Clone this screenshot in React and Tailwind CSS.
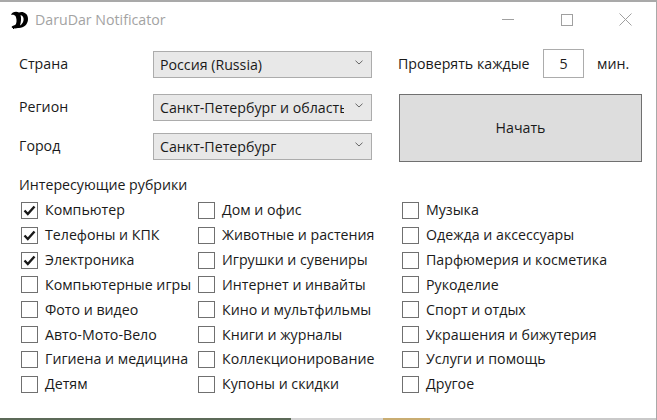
const left = [
  ["Компьютер", true],
  ["Телефоны и КПК", true],
  ["Электроника", true],
  ["Компьютерные игры", false],
  ["Фото и видео", false],
  ["Авто-Мото-Вело", false],
  ["Гигиена и медицина", false],
  ["Детям", false],
];
const middle = ["Дом и офис", "Животные и растения", "Игрушки и сувениры", "Интернет и инвайты", "Кино и мультфильмы", "Книги и журналы", "Коллекционирование", "Купоны и скидки"];
const right = ["Музыка", "Одежда и аксессуары", "Парфюмерия и косметика", "Рукоделие", "Спорт и отдых", "Украшения и бижутерия", "Услуги и помощь", "Другое"];

function Check({ label, checked }) {
  return (
    <div className="flex items-center h-[24.85px] gap-[7px]">
      <div className="w-[17px] h-[17px] shrink-0 border border-[#707070] bg-white flex items-center justify-center">
        {checked && (
          <svg width="13" height="11" viewBox="0 0 13 11">
            <path d="M1.5 5.5 L4.8 9 L11.5 1.5" fill="none" stroke="#1a1a1a" strokeWidth="2.4" />
          </svg>
        )}
      </div>
      <span className="whitespace-nowrap">{label}</span>
    </div>
  );
}

function Select({ value }) {
  return (
    <div className="w-[219px] h-[27px] border border-[#acacac] bg-[#e8e8e8] flex items-center pl-[6px] pr-[8px]">
      <span className="w-[184px] whitespace-nowrap overflow-hidden">{value}</span>
      <svg className="ml-auto shrink-0 mb-[4px]" width="8" height="5" viewBox="0 0 8 5">
        <path d="M0.5 0.7 L4 4 L7.5 0.7" fill="none" stroke="#666" strokeWidth="1" />
      </svg>
    </div>
  );
}

function Row({ label, value, className }) {
  return (
    <div className={"flex items-center " + className}>
      <span className="w-[134px] -mt-[2px]">{label}</span>
      <Select value={value} />
    </div>
  );
}

export default function App() {
  return (
    <div className="w-[657px] h-[420px] overflow-hidden bg-white text-[14.2px] leading-[20px] text-[#1a1a1a] font-['Open_Sans','Noto_Sans',sans-serif] flex flex-col border-r border-[#a9a9a9]">
      <div className="h-[37px] shrink-0 border-t-2 border-[#a9a9a9] flex items-center">
        <svg className="ml-[11px]" width="17" height="18" viewBox="0 0 17 18">
          <path d="M0 4 C1 1 5 0 8 1.5 C11 0 17 1.5 17 8 C17 13.5 12.5 17.5 7 17 C5 17.5 2 18 0.5 16 C1.5 14.5 4 14.5 5 13 C6 10 5.5 7 4.5 5 C3 3.5 1.5 3.5 0 4 Z" fill="#000" />
          <path d="M9.5 4 C12 4.5 13 7 12.5 9.5 C12 12 10.5 13.5 9 14.5 C10 11 10.5 7 9.5 4 Z" fill="#fff" />
        </svg>
        <span className="ml-[7px] text-[#a3a3a3]">DaruDar Notificator</span>
        <div className="ml-auto flex items-center">
          <svg width="13" height="13" viewBox="0 0 13 13" className="mr-[46px]">
            <path d="M0 6.5 H12" stroke="#a0a0a0" fill="none" />
          </svg>
          <svg width="12" height="12" viewBox="0 0 12 12" className="mr-[46px]">
            <rect x="0.5" y="0.5" width="11" height="11" stroke="#a0a0a0" fill="none" />
          </svg>
          <svg width="13" height="13" viewBox="0 0 13 13" className="mr-[24px]">
            <path d="M0.5 0.5 L12.5 12.5 M12.5 0.5 L0.5 12.5" stroke="#a0a0a0" fill="none" />
          </svg>
        </div>
      </div>

      <div className="flex pl-[19px] mt-[14px]">
        <div className="flex flex-col">
          <Row label="Страна" value="Россия (Russia)" />
          <Row label="Регион" value="Санкт-Петербург и область" className="mt-[16px]" />
          <Row label="Город" value="Санкт-Петербург" className="mt-[12px]" />
        </div>
        <div className="ml-[27px] flex-1 flex flex-col">
          <div className="flex items-center h-[29px] -mt-[2px] -ml-[1px]">
            <span className="w-[145px] whitespace-nowrap">Проверять каждые</span>
            <div className="w-[41px] h-[29px] border border-[#acacac] flex items-center justify-center">5</div>
            <span className="ml-[13px]">мин.</span>
          </div>
          <button className="mt-[16px] w-[243px] h-[68px] border border-[#707070] bg-[#dddddd] text-[#1a1a1a]">Начать</button>
        </div>
      </div>

      <div className="pl-[19px] mt-[13px]">Интересующие рубрики</div>
      <div className="flex pl-[21px] mt-[3px]">
        <div className="w-[177px] flex flex-col">
          {left.map(([label, checked]) => <Check key={label} label={label} checked={checked} />)}
        </div>
        <div className="w-[204px] flex flex-col">
          {middle.map((label) => <Check key={label} label={label} />)}
        </div>
        <div className="flex flex-col">
          {right.map((label) => <Check key={label} label={label} />)}
        </div>
      </div>
      <div className="mt-auto h-[2px] flex">
        <div className="w-[291px] bg-[#5c6a58]" />
        <div className="w-[92px] bg-[#d4d4d4]" />
        <div className="w-[47px] bg-[#c9ad72]" />
        <div className="flex-1 bg-[#c9c9c9]" />
      </div>
    </div>
  );
}
